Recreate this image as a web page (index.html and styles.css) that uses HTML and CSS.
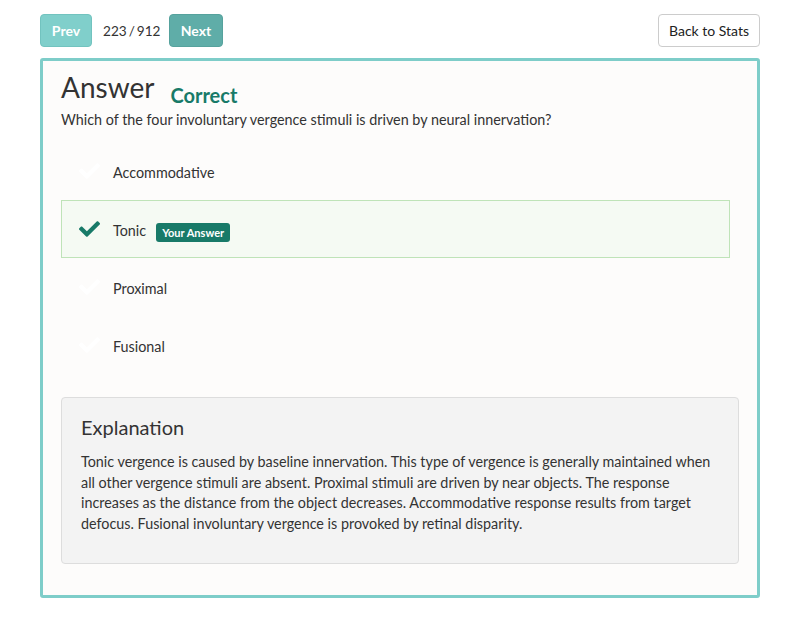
FILE: index.html
```html
<!DOCTYPE html>
<html>
<head>
<meta charset="utf-8">
<link rel="stylesheet" href="styles.css">
</head>
<body>
<div class="page">
  <div class="topbar">
    <div class="pager">
      <button class="btn btn-prev">Prev</button>
      <span class="count">223 / 912</span>
      <button class="btn btn-next">Next</button>
    </div>
    <button class="btn btn-back">Back to Stats</button>
  </div>
  <div class="card">
    <div class="title-row">
      <h1 class="title">Answer</h1>
      <span class="status">Correct</span>
    </div>
    <p class="question">Which of the four involuntary vergence stimuli is driven by neural innervation?</p>
    <ul class="options">
      <li class="option">
        <svg class="check" viewBox="0 64 512 384"><path d="M173.898 439.404l-166.4-166.4c-9.997-9.997-9.997-26.206 0-36.204l36.203-36.204c9.997-9.998 26.207-9.998 36.204 0L192 312.69 432.095 72.596c9.997-9.997 26.207-9.997 36.204 0l36.203 36.204c9.997 9.997 9.997 26.206 0 36.204l-294.4 294.401c-9.998 9.997-26.207 9.997-36.204-.001z"/></svg>
        <span class="opt-text">Accommodative</span>
      </li>
      <li class="option selected">
        <svg class="check" viewBox="0 64 512 384"><path d="M173.898 439.404l-166.4-166.4c-9.997-9.997-9.997-26.206 0-36.204l36.203-36.204c9.997-9.998 26.207-9.998 36.204 0L192 312.69 432.095 72.596c9.997-9.997 26.207-9.997 36.204 0l36.203 36.204c9.997 9.997 9.997 26.206 0 36.204l-294.4 294.401c-9.998 9.997-26.207 9.997-36.204-.001z"/></svg>
        <span class="opt-text">Tonic</span>
        <span class="badge">Your Answer</span>
      </li>
      <li class="option">
        <svg class="check" viewBox="0 64 512 384"><path d="M173.898 439.404l-166.4-166.4c-9.997-9.997-9.997-26.206 0-36.204l36.203-36.204c9.997-9.998 26.207-9.998 36.204 0L192 312.69 432.095 72.596c9.997-9.997 26.207-9.997 36.204 0l36.203 36.204c9.997 9.997 9.997 26.206 0 36.204l-294.4 294.401c-9.998 9.997-26.207 9.997-36.204-.001z"/></svg>
        <span class="opt-text">Proximal</span>
      </li>
      <li class="option">
        <svg class="check" viewBox="0 64 512 384"><path d="M173.898 439.404l-166.4-166.4c-9.997-9.997-9.997-26.206 0-36.204l36.203-36.204c9.997-9.998 26.207-9.998 36.204 0L192 312.69 432.095 72.596c9.997-9.997 26.207-9.997 36.204 0l36.203 36.204c9.997 9.997 9.997 26.206 0 36.204l-294.4 294.401c-9.998 9.997-26.207 9.997-36.204-.001z"/></svg>
        <span class="opt-text">Fusional</span>
      </li>
    </ul>
    <div class="explanation">
      <h2 class="exp-title">Explanation</h2>
      <p class="exp-text">Tonic vergence is caused by baseline innervation. This type of vergence is generally maintained when all other vergence stimuli are absent. Proximal stimuli are driven by near objects. The response increases as the distance from the object decreases. Accommodative response results from target defocus. Fusional involuntary vergence is provoked by retinal disparity.</p>
    </div>
  </div>
</div>
</body>
</html>
```

FILE: styles.css
```css
* { box-sizing: border-box; }
html, body { margin: 0; padding: 0; background: #ffffff; }
body {
  font-family: Lato, "Open Sans", sans-serif;
  font-size: 14.35px;
  color: #333333;
}
.page { padding: 14px 40px 0 40px; width: 800px; }
.topbar {
  display: flex;
  justify-content: space-between;
  align-items: center;
  height: 33px;
}
.pager { display: flex; align-items: center; }
.btn {
  font-family: inherit;
  font-size: 14px;
  height: 33px;
  border-radius: 4px;
  padding: 0 12px;
  cursor: pointer;
}
.btn-prev {
  width: 52px;
  padding: 0;
  background: #80cfcb;
  border: 1px solid #72c3bf;
  color: #ffffff;
  font-weight: 700;
}
.btn-next {
  width: 54px;
  padding: 0;
  background: #5fada8;
  border: 1px solid #56a29d;
  color: #ffffff;
  font-weight: 700;
}
.count {
  width: 56px;
  margin: 0 10px 0 11px;
  font-size: 13.6px;
  color: #333;
  word-spacing: -1.5px;
  white-space: nowrap;
}
.btn-back {
  width: 102px;
  padding: 0;
  background: #ffffff;
  border: 1px solid #cccccc;
  color: #222222;
}
.card {
  margin-top: 11px;
  height: 540px;
  border: 3px solid #7ecdc9;
  border-radius: 3px;
  background: #fdfcfb;
  padding: 8px 18px 0 18px;
}
.title-row { display: flex; align-items: baseline; height: 38px; }
.title {
  margin: 0;
  font-size: 28px;
  font-weight: 400;
  line-height: 36px;
  color: #333333;
}
.status {
  margin-left: 16px;
  font-size: 20px;
  font-weight: 700;
  color: #187a68;
  position: relative;
  top: 5px;
}
.question { margin: 0; line-height: 20px; height: 35px; padding-top: 3px; }
.options { list-style: none; margin: 0 9px 0 0; padding: 0; }
.option {
  height: 58px;
  display: flex;
  align-items: center;
  padding-left: 17px;
  padding-top: 2px;
  border: 1px solid transparent;
}
.option.selected {
  background: #f5faf3;
  border-color: #bfe3b8;
}
.check { width: 21px; height: 16px; fill: #ffffff; flex: none; margin-top: -2px; }
.selected .check { fill: #187a68; }
.opt-text { margin-left: 13px; }
.badge {
  margin-left: 10px;
  margin-top: 4px;
  background: #187a68;
  color: #ffffff;
  font-size: 11px;
  font-weight: 700;
  border-radius: 3px;
  padding: 0 6px;
  height: 19px;
  line-height: 19px;
}
.explanation {
  margin-top: 23px;
  background: #f3f3f3;
  border: 1px solid #dddddd;
  border-radius: 4px;
  height: 167px;
  padding: 17px 19px 0 19px;
}
.exp-title {
  margin: 0;
  font-size: 20px;
  font-weight: 400;
  line-height: 24px;
  color: #333333;
}
.exp-text { margin: 13px 0 0 0; line-height: 20.6px; }
```
